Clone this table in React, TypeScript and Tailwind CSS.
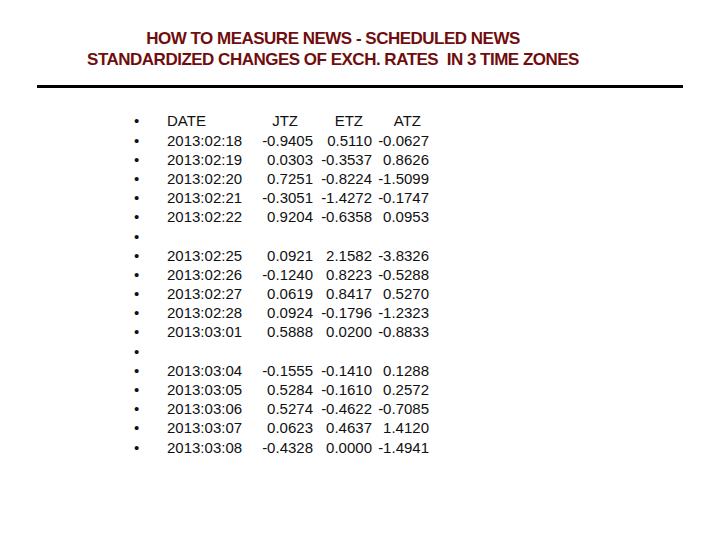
const rows: (string[] | null)[] = [
  ['2013:02:18', '-0.9405', '0.5110', '-0.0627'],
  ['2013:02:19', '0.0303', '-0.3537', '0.8626'],
  ['2013:02:20', '0.7251', '-0.8224', '-1.5099'],
  ['2013:02:21', '-0.3051', '-1.4272', '-0.1747'],
  ['2013:02:22', '0.9204', '-0.6358', '0.0953'],
  null,
  ['2013:02:25', '0.0921', '2.1582', '-3.8326'],
  ['2013:02:26', '-0.1240', '0.8223', '-0.5288'],
  ['2013:02:27', '0.0619', '0.8417', '0.5270'],
  ['2013:02:28', '0.0924', '-0.1796', '-1.2323'],
  ['2013:03:01', '0.5888', '0.0200', '-0.8833'],
  null,
  ['2013:03:04', '-0.1555', '-0.1410', '0.1288'],
  ['2013:03:05', '0.5284', '-0.1610', '0.2572'],
  ['2013:03:06', '0.5274', '-0.4622', '-0.7085'],
  ['2013:03:07', '0.0623', '0.4637', '1.4120'],
  ['2013:03:08', '-0.4328', '0.0000', '-1.4941'],
];

function Row({ cells, header }: { cells: string[] | null; header?: boolean }) {
  return (
    <div className="flex h-[19.2px] items-center pl-[134px]">
      <span className="w-[33px]">•</span>
      {cells && (
        <>
          <span className="w-[86px]">{cells[0]}</span>
          <span className={`w-[60px] text-right ${header ? 'pr-[15px]' : ''}`}>{cells[1]}</span>
          <span className={`w-[59px] text-right ${header ? 'pr-[9px]' : ''}`}>{cells[2]}</span>
          <span className={`w-[57px] text-right ${header ? 'pr-[8px]' : ''}`}>{cells[3]}</span>
        </>
      )}
    </div>
  );
}

export default function App() {
  return (
    <div className="w-[720px] h-[540px] bg-white font-['Liberation_Sans',Arial,sans-serif] overflow-hidden">
      <div className="pt-[29px] pr-[54px] text-center text-[17px] leading-[20.7px] font-bold tracking-[-0.5px] text-[#700d0d]">
        <div>HOW TO MEASURE NEWS - SCHEDULED NEWS</div>
        <div className="whitespace-pre">STANDARDIZED CHANGES OF EXCH. RATES  IN 3 TIME ZONES</div>
      </div>
      <div className="mt-[15px] ml-[37px] w-[646px] h-[3px] bg-black" />
      <div className="mt-[23px] text-[15px] leading-[19.2px] text-[#111]">
        <Row cells={['DATE', 'JTZ', 'ETZ', 'ATZ']} header />
        {rows.map((r, i) => (
          <Row key={i} cells={r} />
        ))}
      </div>
    </div>
  );
}
